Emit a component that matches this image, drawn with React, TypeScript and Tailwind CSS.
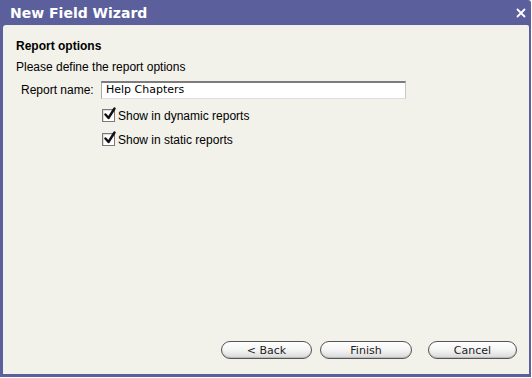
import React from "react";

function Check() {
  return (
    <div className="relative w-[13px] h-[13px] bg-white border border-[#7a7a7a] shadow-[inset_1px_1px_1px_rgba(0,0,0,0.15)]">
      <svg className="absolute left-[0px] top-[-3px]" width="14" height="14" viewBox="0 0 14 14">
        <path d="M2.5 7.5 L5.5 11 L11.5 1.5" fill="none" stroke="#111" strokeWidth="2.4" strokeLinecap="round" strokeLinejoin="round" />
      </svg>
    </div>
  );
}

function Btn({ label, w }: { label: string; w: string }) {
  return (
    <button
      className={`${w} h-[18px] rounded-full border border-[#555] bg-gradient-to-b from-white via-[#f4f4f4] to-[#d9d9d9] shadow-[inset_0_-1px_1px_rgba(0,0,0,0.15)] flex items-center justify-center text-[11px] text-[#222] leading-none`}
      style={{ fontFamily: '"DejaVu Sans", Verdana, sans-serif' }}
    >
      {label}
    </button>
  );
}

export default function App() {
  return (
    <div className="w-[532px] h-[378px] bg-white">
      <div className="w-[531px] h-[377px] bg-[#5b5f9b] rounded-tr-[3px] flex flex-col">
        <div className="h-[25px] flex items-center justify-between pl-[10px] pr-[5px]">
          <span
            className="text-white font-bold text-[14px] leading-none"
            style={{ fontFamily: '"DejaVu Sans", Verdana, sans-serif' }}
          >
            New Field Wizard
          </span>
          <svg width="10" height="10" viewBox="0 0 10 10" className="mt-[1px]">
            <path d="M1 1 L9 9 M9 1 L1 9" stroke="white" strokeWidth="1.8" />
          </svg>
        </div>
        <div
          className="flex-1 ml-[3px] mr-[2px] mb-[3px] bg-[#f2f1ea] rounded-tl-[3px] rounded-tr-[2px] flex flex-col text-[12px] text-black"
          style={{ fontFamily: '"Liberation Sans", Arial, sans-serif' }}
        >
          <div className="pl-[13px] pt-[14px] flex flex-col">
            <div className="font-bold leading-[14px]">Report options</div>
            <div className="leading-[14px] mt-[7px]">Please define the report options</div>
            <div className="flex items-center mt-[7px] ml-[5px]">
              <span className="w-[80px]">Report name:</span>
              <div className="w-[305px] h-[18px] bg-white border-t-2 border-t-[#7c7c7c] border-l border-l-[#a8a8a8] border-r border-r-[#c8c8c8] border-b border-b-[#dedede] flex items-center pl-[4px]"
                style={{ fontFamily: '"DejaVu Sans", Verdana, sans-serif', fontSize: "11px" }}>
                Help Chapters
              </div>
            </div>
            <div className="flex flex-col ml-[86px] mt-[10px] gap-[11px] leading-[14px]">
              <div className="flex items-center gap-[3px] h-[13px]">
                <Check />
                <span>Show in dynamic reports</span>
              </div>
              <div className="flex items-center gap-[3px] h-[13px]">
                <Check />
                <span>Show in static reports</span>
              </div>
            </div>
          </div>
          <div className="flex-1" />
          <div className="flex justify-end items-center pr-[12px] pb-[15px]">
            <Btn label="< Back" w="w-[91px]" />
            <div className="w-[8px]" />
            <Btn label="Finish" w="w-[92px]" />
            <div className="w-[16px]" />
            <Btn label="Cancel" w="w-[89px]" />
          </div>
        </div>
      </div>
    </div>
  );
}
